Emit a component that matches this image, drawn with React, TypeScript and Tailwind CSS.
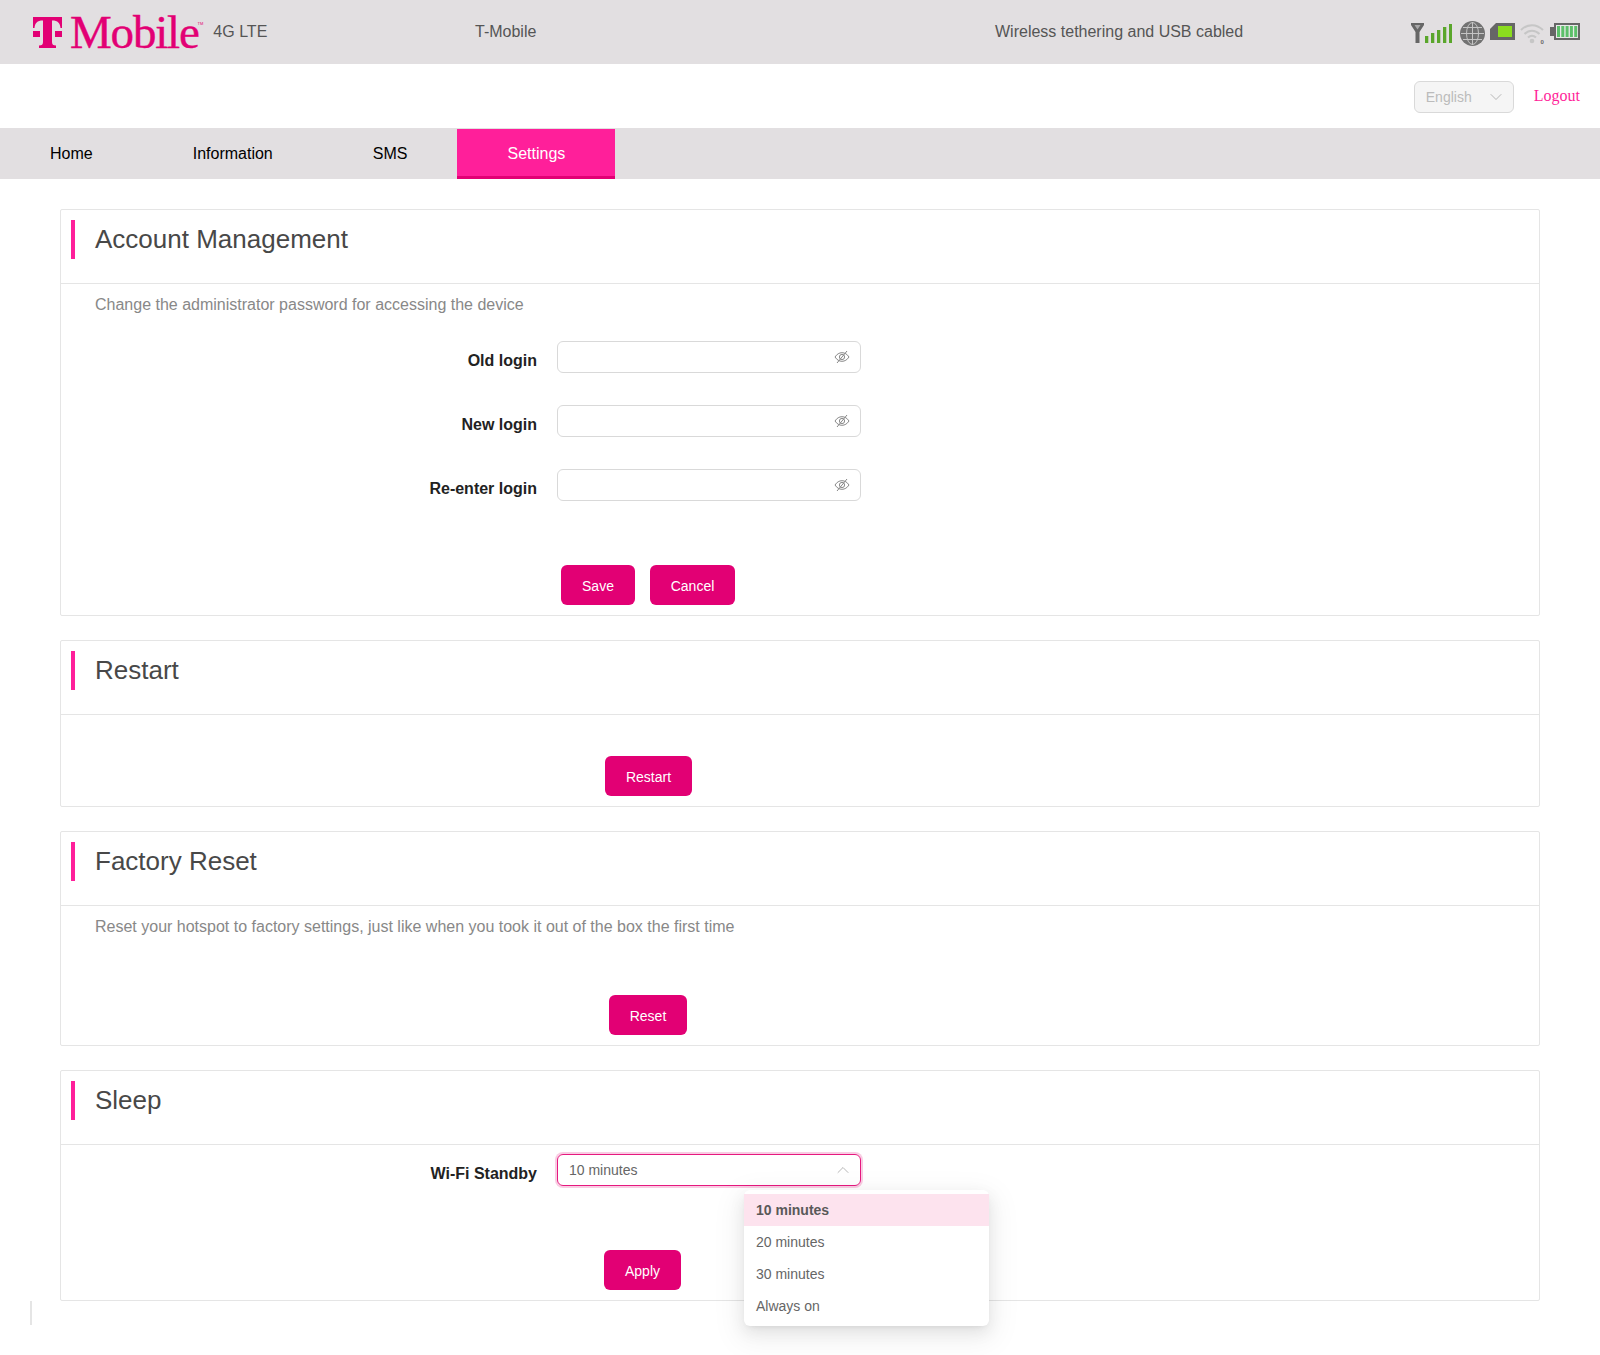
import { ChevronDown, ChevronUp } from "lucide-react";

const FONT = "font-['Liberation_Sans',Arial,sans-serif]";

function TMark() {
  return (
    <svg width="29" height="31" viewBox="0 0 29 31" fill="#e20074" aria-hidden>
      <path d="M0 0H29V11H27.500C27 6 25 3.500 19 3.500V25C19 27.500 20 28.500 23 28.500V31H6V28.500C9 28.500 10 27.500 10 25V3.500C4 3.500 2 6 1.500 11H0Z" />
      <rect x="0" y="14" width="7" height="6" />
      <rect x="22" y="14" width="7" height="6" />
    </svg>
  );
}

function Signal() {
  return (
    <svg width="41" height="25" viewBox="0 0 41 25" aria-hidden>
      <path d="M0 2H13V4L8.500 11V22H4.500V11L0 4Z" fill="#666" />
      <path d="M3.500 4h6L6.500 8.500z" fill="#a9a8a9" />
      <path d="M14 15h3.300v7H14zM20 12h3.300v10H20zM26 9h3.300v13H26zM32 6h3.300v16H32zM38 3h3v19h-3z" fill="#5aa62b" />
    </svg>
  );
}

function Globe() {
  return (
    <svg width="25" height="25" viewBox="0 0 25 25" fill="none" aria-hidden>
      <circle cx="12.500" cy="12.500" r="12.500" fill="#727272" />
      <ellipse cx="12.500" cy="12.500" rx="6" ry="11" stroke="#c4c4c4" />
      <path d="M12.500 1v23M1 12.500h23M3 6.500h19M3 18.500h19" stroke="#c4c4c4" />
    </svg>
  );
}

function Sim() {
  return (
    <svg width="25" height="25" viewBox="0 0 25 25" aria-hidden>
      <path d="M6 2h19v17H0V8z" fill="#666" />
      <rect x="8" y="5" width="14" height="11" fill="#8bdc1e" />
    </svg>
  );
}

function Wifi() {
  return (
    <svg width="25" height="25" viewBox="0 0 25 25" fill="none" stroke="#c6c6c6" strokeWidth="2" aria-hidden>
      <path d="M1 9c6.500-6.500 15.500-6.500 22 0M4.500 13c4.500-4.500 10.500-4.500 15 0M8 16.500c2.500-2.500 5.500-2.500 8 0" />
      <circle cx="12" cy="20" r="2.300" fill="#c6c6c6" stroke="none" />
      <text x="20.500" y="23" fontSize="6" fontWeight="700" fill="#666" stroke="none">0</text>
    </svg>
  );
}

function Battery() {
  return (
    <svg width="30" height="25" viewBox="0 0 30 25" aria-hidden>
      <path d="M4 2h26v17H4zM0 6h4v9H0z" fill="#666" />
      <rect x="6" y="4" width="22" height="13" fill="#e8e8e8" />
      <path d="M7 5h3v11H7zM11.300 5h3v11h-3zM15.600 5h3v11h-3zM19.900 5h3v11h-3zM24.200 5h3v11h-3z" fill="#5cc06a" />
    </svg>
  );
}

function EyeOff() {
  return (
    <svg width="16" height="16" viewBox="0 0 16 16" fill="none" stroke="#888" strokeWidth="1" aria-hidden>
      <path d="M1 8C2.800 5.200 5.200 3.700 8 3.700S13.200 5.200 15 8C13.200 10.800 10.800 12.300 8 12.300S2.800 10.800 1 8z" />
      <circle cx="8" cy="8" r="2.600" />
      <path d="M3 14 13 2" />
    </svg>
  );
}

function Button({ label, w }: { label: string; w: string }) {
  return (
    <button type="button" className={`h-10 rounded-md bg-[#e20074] pt-px text-sm text-white ${w}`}>
      {label}
    </button>
  );
}

function Card({ title, children, cls }: { title: string; children: React.ReactNode; cls: string }) {
  return (
    <section className={`relative rounded-[2px] border border-[#e5e5e5] ${cls}`}>
      <div className="h-[74px] border-b border-[#e5e5e5] pt-[10px] pl-[10px]">
        <h2 className="h-[39px] border-l-4 border-[#ff1f9a] pl-[20px] text-[26px] leading-[38px] text-[#484848]">{title}</h2>
      </div>
      {children}
    </section>
  );
}

function LoginRow({ label }: { label: string }) {
  return (
    <div className="flex h-[32px] items-start">
      <label className="w-[496px] pt-[11px] pr-5 text-right text-base leading-[18px] font-bold text-[#222]">{label}</label>
      <div className="flex h-8 w-[304px] items-center justify-end rounded-md border border-[#d9d9d9] pr-[10px]">
        <EyeOff />
      </div>
    </div>
  );
}

export default function App() {
  return (
    <div className={`${FONT} relative h-[1355px] bg-white`}>
      <header className="flex h-16 items-center bg-[#e2dfe1] text-base text-[#555]">
        <div className="flex w-[475px] items-center pl-[33px]">
          <TMark />
          <span className="ml-[8px] font-['Liberation_Serif',serif] text-[47px] leading-none tracking-[-1.2px] text-[#e20074] [-webkit-text-stroke:0.4px_#e20074]">Mobile</span>
          <span className="mb-4 -ml-px text-[4px] text-[#e20074]">TM</span>
          <span className="ml-[10px]">4G LTE</span>
        </div>
        <span className="w-[520px]">T-Mobile</span>
        <span>Wireless tethering and USB cabled</span>
        <div className="ml-auto flex items-center gap-[5px] pt-[3px] pr-5">
          <div className="mr-[3px]">
            <Signal />
          </div>
          <Globe />
          <Sim />
          <Wifi />
          <Battery />
        </div>
      </header>

      <div className="flex h-16 items-center justify-end pr-5">
        <div className="mt-[2px] flex h-8 w-[100px] items-center justify-between rounded-md border border-[#d9d9d9] bg-[#f5f5f5] pr-[7px] pl-[11px] text-sm text-[#bbb]">
          English
          <ChevronDown size={20} strokeWidth={1} color="#aaa" />
        </div>
        <a className="ml-5 font-['Liberation_Serif',serif] text-base text-[#ff1f9a]">Logout</a>
      </div>

      <nav className="flex h-[51px] bg-[#e2dfe1] text-base text-black">
        <a className="px-[50px] pt-[14px]">Home</a>
        <a className="px-[50px] pt-[14px]">Information</a>
        <a className="px-[50px] pt-[14px]">SMS</a>
        <a className="mt-px w-[158px] border-b-[3px] border-[#e20074] bg-[#ff1f9a] pt-[13px] text-center text-white">Settings</a>
      </nav>

      <main className="flex flex-col gap-6 px-[60px] pt-[30px]">
        <Card title="Account Management" cls="h-[407px]">
          <p className="pt-[9px] pl-[34px] text-base leading-[24px] text-[#888]">Change the administrator password for accessing the device</p>
          <div className="mt-[24px] flex flex-col gap-8">
            <LoginRow label="Old login" />
            <LoginRow label="New login" />
            <LoginRow label="Re-enter login" />
          </div>
          <div className="mt-[64px] flex gap-[15px] pl-[500px]">
            <Button label="Save" w="w-[74px]" />
            <Button label="Cancel" w="w-[85px]" />
          </div>
        </Card>

        <Card title="Restart" cls="h-[167px]">
          <div className="flex pt-[41px] pl-[544px]">
            <Button label="Restart" w="w-[87px]" />
          </div>
        </Card>

        <Card title="Factory Reset" cls="h-[215px]">
          <p className="pt-[9px] pl-[34px] text-base leading-[24px] text-[#888]">Reset your hotspot to factory settings, just like when you took it out of the box the first time</p>
          <div className="flex pt-[56px] pl-[548px]">
            <Button label="Reset" w="w-[78px]" />
          </div>
        </Card>

        <Card title="Sleep" cls="h-[231px]">
          <div className="flex h-[42px] items-start pt-[9px]">
            <label className="w-[496px] pt-[11px] pr-5 text-right text-base leading-[18px] font-bold text-[#222]">Wi-Fi Standby</label>
            <div className="flex h-8 w-[304px] items-center justify-between rounded-md border border-[#e6197f] pr-[7px] pl-[11px] text-sm text-[#666] shadow-[0_0_0_2px_rgba(226,0,116,0.2)]">
              10 minutes
              <ChevronUp size={20} strokeWidth={1} color="#aaa" />
            </div>
          </div>
          <div className="flex pt-[63px] pl-[543px]">
            <Button label="Apply" w="w-[77px]" />
          </div>
          <ul className="absolute top-[119px] left-[683px] w-[245px] rounded-md bg-white py-1 text-sm text-[#666] shadow-[0_3px_6px_-4px_rgba(0,0,0,0.12),0_6px_16px_0_rgba(0,0,0,0.08),0_9px_28px_8px_rgba(0,0,0,0.05)]">
            <li className="flex h-8 items-center bg-[#fde3ee] px-3 font-bold text-[#595959]">10 minutes</li>
            <li className="flex h-8 items-center px-3">20 minutes</li>
            <li className="flex h-8 items-center px-3">30 minutes</li>
            <li className="flex h-8 items-center px-3">Always on</li>
          </ul>
        </Card>
      </main>

      <div className="absolute top-[1301px] left-[30px] h-6 w-[2px] bg-[#e5e5e5]" />
    </div>
  );
}
